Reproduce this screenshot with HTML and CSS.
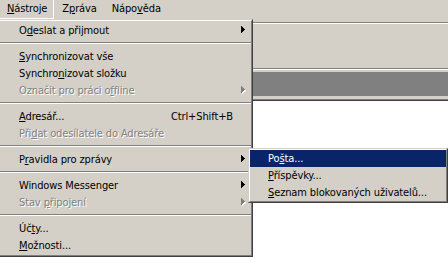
FILE: index.html
```html
<!DOCTYPE html>
<html lang="cs">

<head>
    <meta charset="UTF-8">
    <title>Nástroje</title>
    <link rel="stylesheet" href="styles.css">
</head>

<body>
    <div class="window">
        <!-- Menu bar -->
        <div class="menubar">
            <span class="menu-title pressed"><u>N</u>ástroje</span>
            <span class="menu-title">Z<u>p</u>ráva</span>
            <span class="menu-title">Nápo<u>v</u>ěda</span>
        </div>
        <div class="rebar"></div>
        <div class="folderbar">
            <div class="folder-title"></div>
        </div>
        <div class="content"></div>
    </div>

    <!-- Tools menu -->
    <div class="popup main-menu">
        <div class="popup-inner">
            <div class="item">
                <span class="label">O<u>d</u>eslat a přijmout</span>
                <svg class="arrow" width="4" height="7"><path d="M0 0h1v7H0zM1 1h1v5H1zM2 2h1v3H2zM3 3h1v1H3z" /></svg>
            </div>
            <div class="sep"><div></div></div>
            <div class="item"><span class="label"><u>S</u>ynchronizovat vše</span></div>
            <div class="item"><span class="label">Synchro<u>n</u>izovat složku</span></div>
            <div class="item disabled">
                <span class="label">Označit pro práci o<u>f</u>fline</span>
                <svg class="arrow" width="4" height="7"><path d="M0 0h1v7H0zM1 1h1v5H1zM2 2h1v3H2zM3 3h1v1H3z" /></svg>
            </div>
            <div class="sep"><div></div></div>
            <div class="item">
                <span class="label"><u>A</u>dresář...</span>
                <span class="key">Ctrl+Shift+B</span>
            </div>
            <div class="item disabled"><span class="label">Při<u>d</u>at odesílatele do Adresáře</span></div>
            <div class="sep"><div></div></div>
            <div class="item">
                <span class="label">P<u>r</u>avidla pro zprávy</span>
                <svg class="arrow" width="4" height="7"><path d="M0 0h1v7H0zM1 1h1v5H1zM2 2h1v3H2zM3 3h1v1H3z" /></svg>
            </div>
            <div class="sep"><div></div></div>
            <div class="item">
                <span class="label">Windows Messenger</span>
                <svg class="arrow" width="4" height="7"><path d="M0 0h1v7H0zM1 1h1v5H1zM2 2h1v3H2zM3 3h1v1H3z" /></svg>
            </div>
            <div class="item disabled">
                <span class="label">Stav <u>p</u>řipojení</span>
                <svg class="arrow" width="4" height="7"><path d="M0 0h1v7H0zM1 1h1v5H1zM2 2h1v3H2zM3 3h1v1H3z" /></svg>
            </div>
            <div class="sep"><div></div></div>
            <div class="item"><span class="label">Úč<u>t</u>y...</span></div>
            <div class="item"><span class="label"><u>M</u>ožnosti...</span></div>
        </div>
    </div>

    <!-- Rules submenu -->
    <div class="popup submenu">
        <div class="popup-inner">
            <div class="item active"><span class="label">Po<u>š</u>ta...</span></div>
            <div class="item"><span class="label"><u>P</u>říspěvky...</span></div>
            <div class="item"><span class="label"><u>S</u>eznam blokovaných uživatelů...</span></div>
        </div>
    </div>
</body>

</html>
```

FILE: styles.css
```css
* {
    margin: 0;
    padding: 0;
    box-sizing: border-box;
}

body {
    width: 448px;
    height: 257px;
    overflow: hidden;
    background-color: #fff;
    color: #000;
    font-family: "DejaVu Sans Condensed", "Liberation Sans", sans-serif;
    font-size: 11px;
    letter-spacing: -0.12px;
}

u {
    text-decoration: underline;
    text-underline-offset: 1px;
}

/* window behind the menu */
.menubar {
    height: 22px;
    margin-left: -1px;
    display: flex;
    align-items: flex-start;
    background-color: #d4d0c8;
}

.menu-title {
    height: 19px;
    line-height: 18px;
    padding: 0 6px 0 7px;
    border: 1px solid transparent;
    border-top: 0;
    white-space: nowrap;
}

.menu-title.pressed {
    border-left-color: #808080;
    border-right-color: #fff;
    border-bottom-color: #fff;
}

.rebar {
    height: 46px;
    background-color: #d4d0c8;
    border-top: 1px solid #808080;
    box-shadow: inset 0 1px 0 #fff;
}

.folderbar {
    padding: 3px 0;
    background-color: #d4d0c8;
    border-top: 1px solid #808080;
    box-shadow: inset 0 1px 0 #fff;
}

.folder-title {
    height: 24px;
    background-color: #808080;
}

.content {
    height: 160px;
    background-color: #fff;
    border-top: 1px solid #808080;
    box-shadow: inset 0 1px 0 #404040;
}

/* popup menus */
.popup {
    position: absolute;
    background-color: #d4d0c8;
    border: 1px solid;
    border-color: #d4d0c8 #404040 #404040 #d4d0c8;
}

.popup-inner {
    height: 100%;
    border: 1px solid;
    border-color: #fff #808080 #808080 #fff;
}

.main-menu {
    left: -2px;
    top: 19px;
    width: 255px;
    height: 238px;
}

.main-menu .popup-inner {
    padding: 1px;
}

.submenu {
    left: 248px;
    top: 148px;
    width: 200px;
    height: 55px;
}

.item {
    height: 17px;
    line-height: 17px;
    padding: 0 5px 0 18px;
    display: flex;
    align-items: flex-start;
    white-space: nowrap;
}

.item .label {
    flex: 1;
}

.item .key {
    margin-right: 12px;
}

.item .arrow {
    margin-top: 4px;
    fill: #000;
}

.item.disabled {
    color: #808080;
    text-shadow: 1px 1px 0 #fff;
}

.item.disabled .arrow {
    fill: #808080;
    filter: drop-shadow(1px 1px 0 #fff);
}

.item.active {
    background-color: #0a246a;
    color: #fff;
}

.sep {
    height: 9px;
    padding-top: 3px;
    margin: 0 -1px;
}

.sep div {
    border-top: 1px solid #808080;
    border-bottom: 1px solid #fff;
}
```
